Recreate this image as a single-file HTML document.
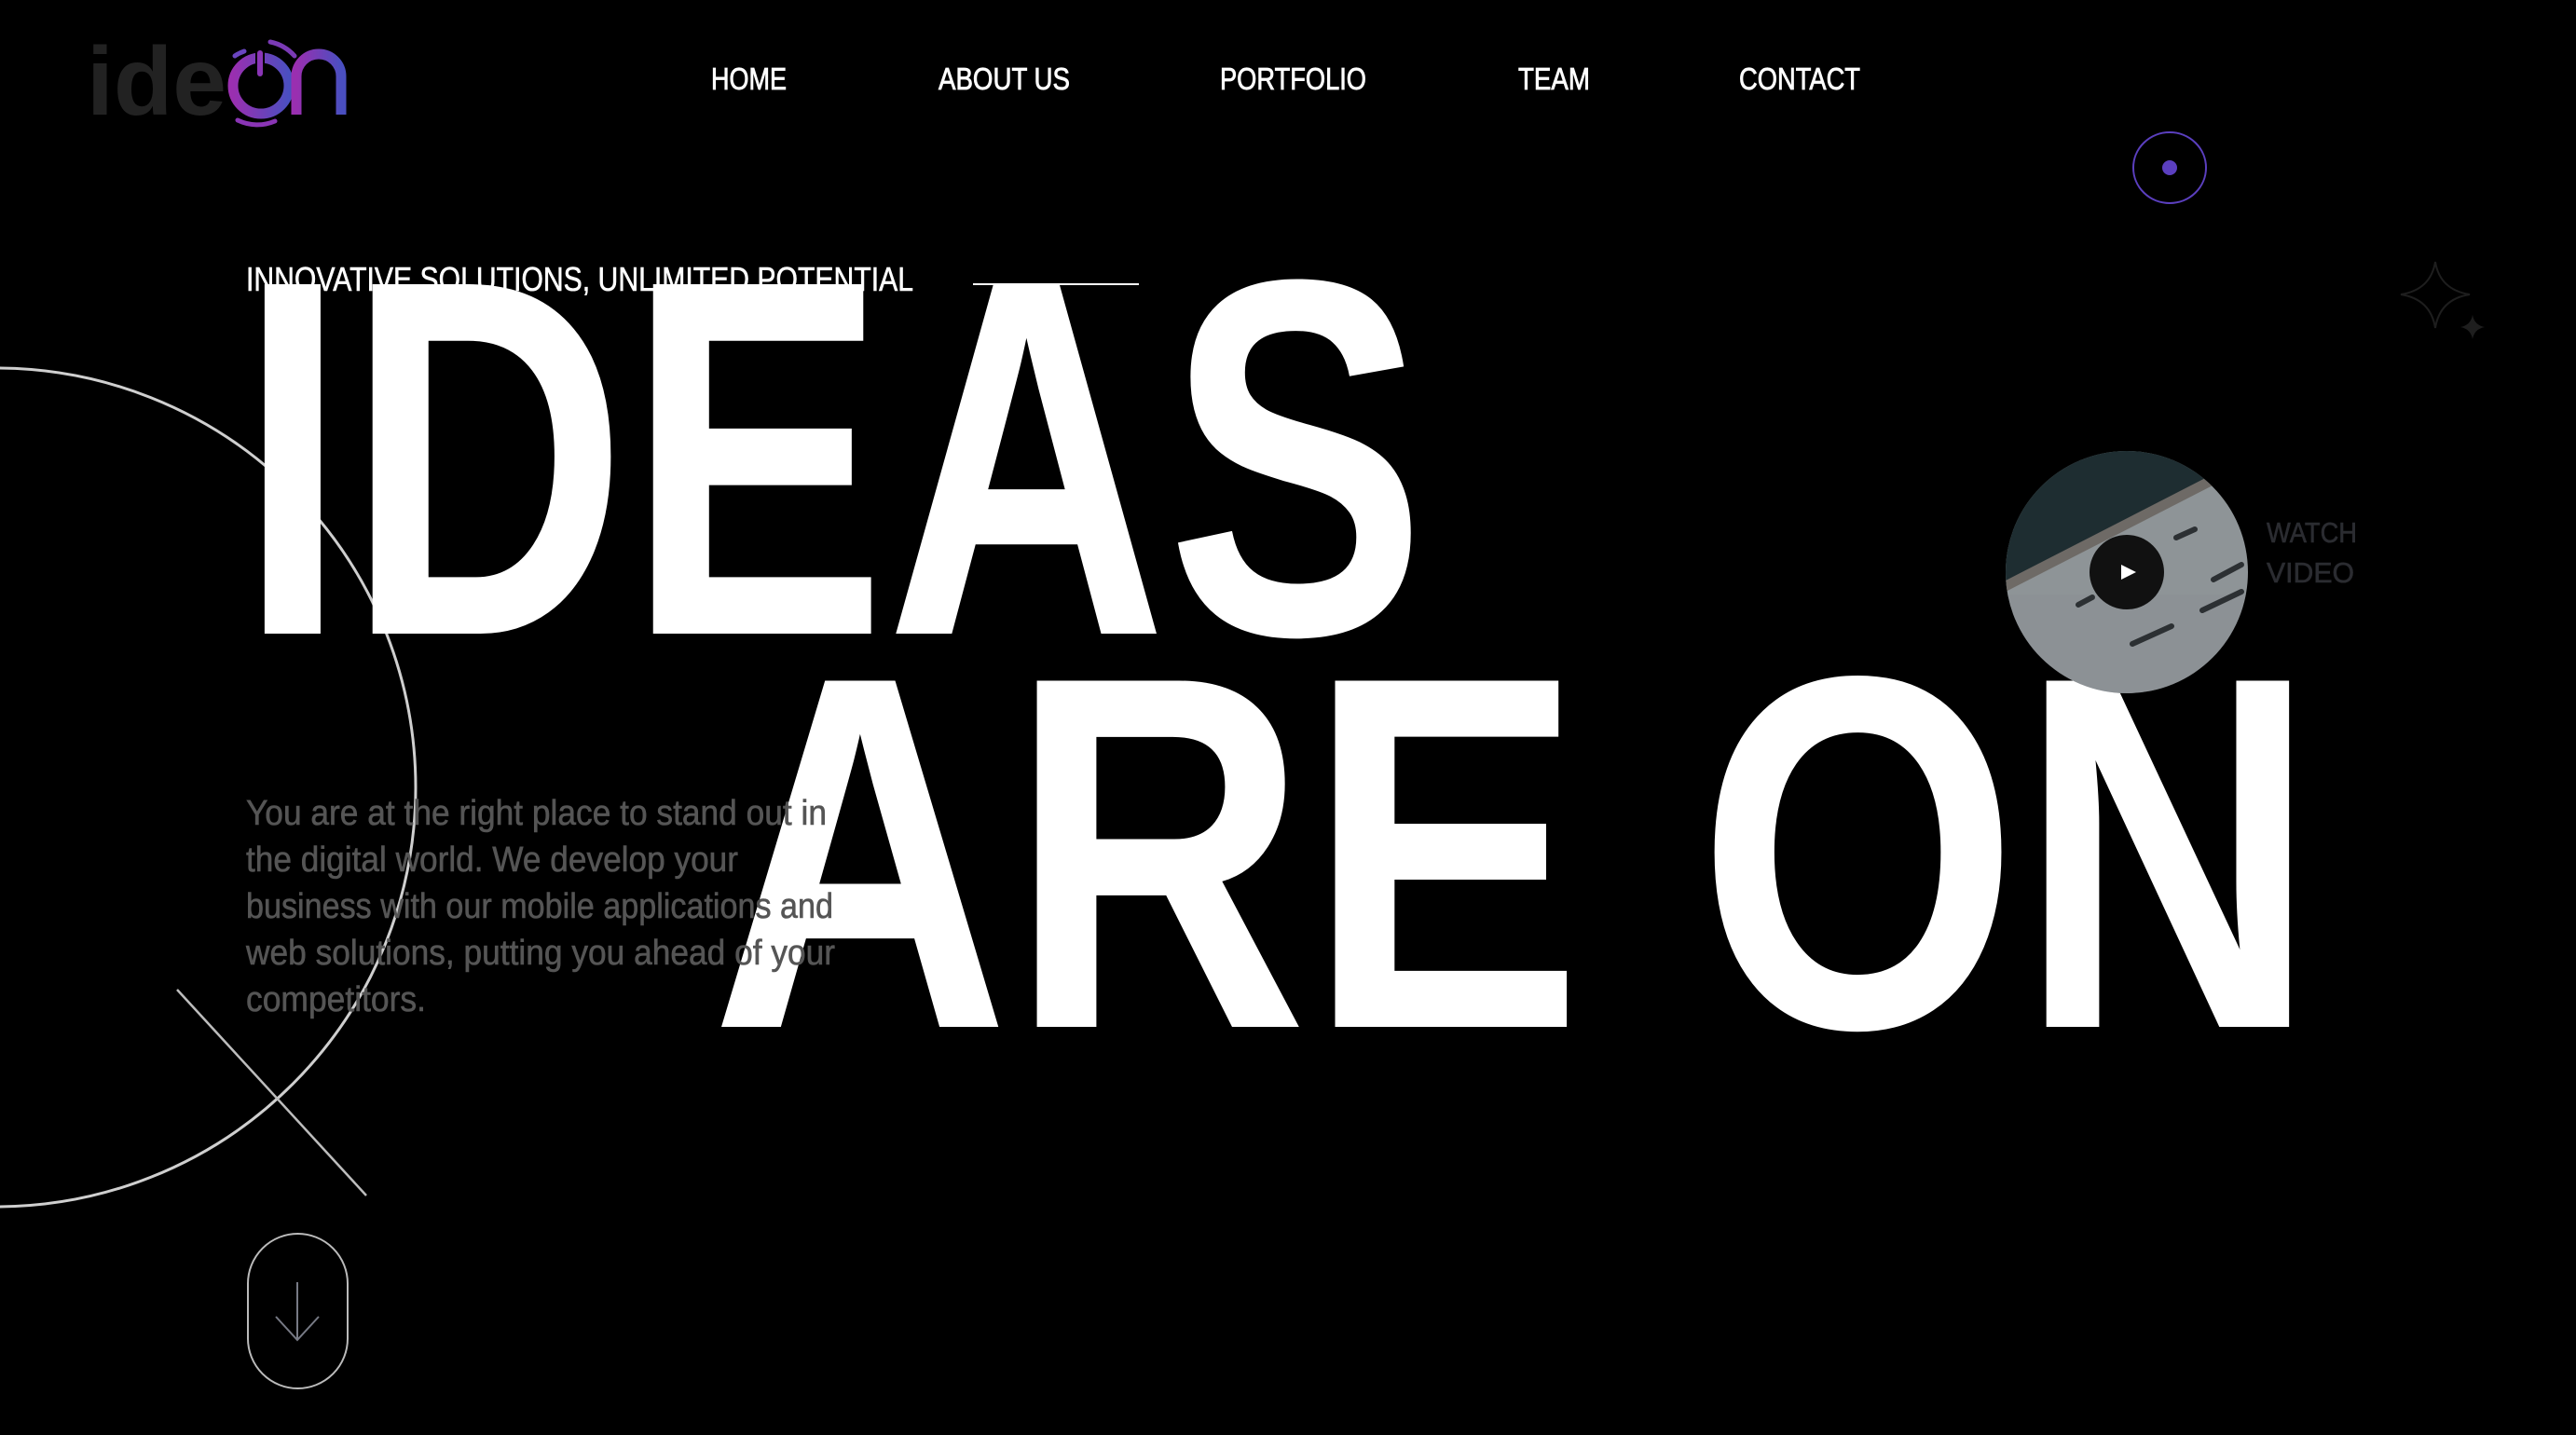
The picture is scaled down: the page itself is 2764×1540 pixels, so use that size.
<!DOCTYPE html>
<html><head><meta charset="utf-8"><style>
html,body{margin:0;padding:0;background:#000;width:2764px;height:1540px;overflow:hidden}
svg{display:block}
</style></head><body>
<svg width="2764" height="1540" viewBox="0 0 2764 1540" xmlns="http://www.w3.org/2000/svg" font-family="Liberation Sans, sans-serif">
<defs>
<linearGradient id="lg" x1="0" y1="0" x2="1" y2="0">
<stop offset="0" stop-color="#9a2fb0"/><stop offset="1" stop-color="#4a4fc0"/>
</linearGradient>
<clipPath id="vc"><circle cx="2282" cy="614" r="130"/></clipPath>
</defs>
<rect width="2764" height="1540" fill="#000"/>

<!-- logo -->
<text x="93" y="123" font-size="104" font-weight="bold" fill="#222" textLength="150" lengthAdjust="spacingAndGlyphs">ide</text>
<circle cx="280" cy="92" r="30" fill="none" stroke="url(#lg)" stroke-width="11"/>
<rect x="274" y="50" width="10" height="38" rx="4" fill="#000"/>
<rect x="276" y="54" width="6" height="28" rx="3" fill="#8a35b5"/>
<path d="M262 55 A42 42 0 0 0 252 60" fill="none" stroke="#6a45c0" stroke-width="5" stroke-linecap="round"/>
<path d="M290 45 A48 48 0 0 1 316 60" fill="none" stroke="#7a3ab5" stroke-width="5" stroke-linecap="round"/>
<path d="M255 129 A48 48 0 0 0 295 130" fill="none" stroke="#8a35b5" stroke-width="5" stroke-linecap="round"/>
<path d="M318 123 V82 A24 24 0 0 1 366 82 V123" fill="none" stroke="url(#lg)" stroke-width="11"/>

<!-- nav -->
<g fill="#fff" stroke="#fff" stroke-width="0.8" font-size="33">
<text x="763" y="96" textLength="81" lengthAdjust="spacingAndGlyphs">HOME</text>
<text x="1007" y="96" textLength="141" lengthAdjust="spacingAndGlyphs">ABOUT US</text>
<text x="1309" y="96" textLength="157" lengthAdjust="spacingAndGlyphs">PORTFOLIO</text>
<text x="1629" y="96" textLength="77" lengthAdjust="spacingAndGlyphs">TEAM</text>
<text x="1866" y="96" textLength="130" lengthAdjust="spacingAndGlyphs">CONTACT</text>
</g>

<!-- purple dot circle -->
<ellipse cx="2328" cy="180" rx="39" ry="38" fill="none" stroke="#5b3fbf" stroke-width="2"/>
<circle cx="2328" cy="180" r="8" fill="#5b3fbf"/>

<!-- stars -->
<path d="M2613 281 Q2618 311 2650 316 Q2618 321 2613 352 Q2608 321 2576 316 Q2608 311 2613 281 Z" fill="none" stroke="#1e1e1e" stroke-width="2"/>
<path d="M2653 338 Q2655 349 2666 351 Q2655 353 2653 364 Q2651 353 2640 351 Q2651 349 2653 338 Z" fill="#1e1e1e"/>

<!-- circle decoration and line -->
<circle cx="-4" cy="845" r="450" fill="none" stroke="#cfcfcf" stroke-width="3"/>
<line x1="190" y1="1062" x2="393" y2="1283" stroke="#bdbdbd" stroke-width="2.5"/>

<!-- big letters -->
<text x="256" y="680" font-size="545" font-weight="bold" fill="#fff" textLength="1274" lengthAdjust="spacingAndGlyphs">IDEAS</text>
<text x="763" y="1102" font-size="540" font-weight="bold" fill="#fff" textLength="1723" lengthAdjust="spacingAndGlyphs">ARE ON</text>

<!-- tagline -->
<text x="264" y="312" font-size="36" fill="#fff" stroke="#fff" stroke-width="0.6" textLength="716" lengthAdjust="spacingAndGlyphs">INNOVATIVE SOLUTIONS, UNLIMITED POTENTIAL</text>
<line x1="1044" y1="305" x2="1222" y2="305" stroke="#fff" stroke-width="2"/>

<!-- paragraph -->
<g fill="#555" stroke="#555" stroke-width="0.6" font-size="38">
<text x="264" y="885" textLength="623" lengthAdjust="spacingAndGlyphs">You are at the right place to stand out in</text>
<text x="264" y="935" textLength="528" lengthAdjust="spacingAndGlyphs">the digital world. We develop your</text>
<text x="264" y="985" textLength="630" lengthAdjust="spacingAndGlyphs">business with our mobile applications and</text>
<text x="264" y="1035" textLength="632" lengthAdjust="spacingAndGlyphs">web solutions, putting you ahead of your</text>
<text x="264" y="1085" textLength="193" lengthAdjust="spacingAndGlyphs">competitors.</text>
</g>

<!-- scroll pill -->
<rect x="266" y="1324" width="107" height="166" rx="53.5" fill="none" stroke="#bbb" stroke-width="2"/>
<path d="M319 1376 V1438 M296 1413 L319 1438 L342 1413" fill="none" stroke="#777a85" stroke-width="2"/>

<!-- video -->
<g clip-path="url(#vc)">
<rect x="2150" y="482" width="265" height="265" fill="#8e9497"/>
<polygon points="2150,482 2415,482 2415,493 2150,628" fill="#1e2d31"/>
<polygon points="2150,624 2415,488 2415,500 2150,636" fill="#6e6a66"/>
<rect x="2150" y="638" width="265" height="110" fill="#8a8e93" opacity="0.5"/>
<g stroke="#2c3033" stroke-width="6" stroke-linecap="round">
<line x1="2335" y1="577" x2="2355" y2="568"/>
<line x1="2375" y1="622" x2="2405" y2="606"/>
<line x1="2363" y1="655" x2="2405" y2="635"/>
<line x1="2230" y1="649" x2="2245" y2="641"/>
<line x1="2287" y1="649" x2="2310" y2="638"/>
<line x1="2288" y1="691" x2="2330" y2="672"/>
</g>
</g>
<circle cx="2282" cy="614" r="40" fill="#111"/>
<polygon points="2276,606 2276,622 2292,614" fill="#fff"/>
<g fill="#2b2c31" stroke="#2b2c31" stroke-width="0.6" font-size="31">
<text x="2432" y="582" textLength="97" lengthAdjust="spacingAndGlyphs">WATCH</text>
<text x="2432" y="625" textLength="94" lengthAdjust="spacingAndGlyphs">VIDEO</text>
</g>
</svg>
</body></html>
